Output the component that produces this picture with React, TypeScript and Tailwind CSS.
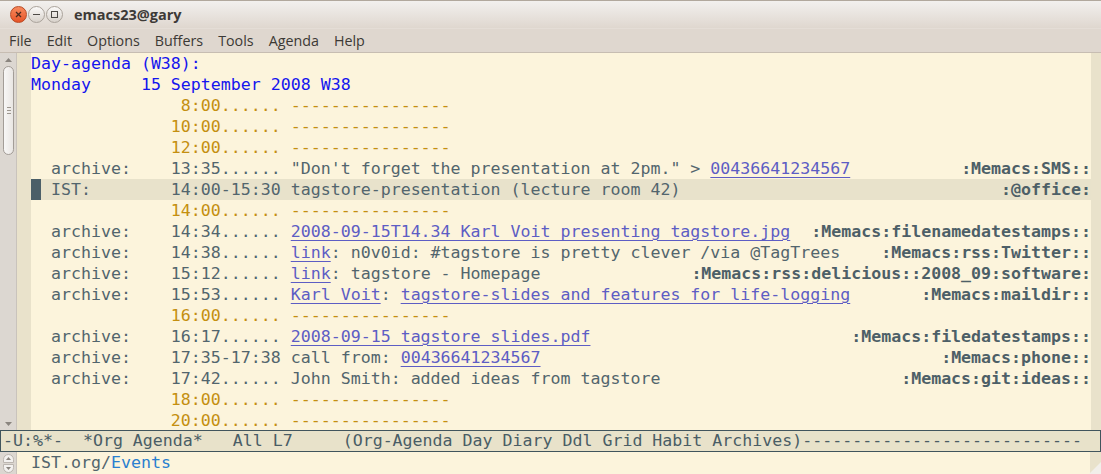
import React from "react";

type Seg = { t: string; c?: "g" | "b" | "y" | "l" | "t" };

const cls: Record<string, string> = {
  g: "text-[#52656d]",
  b: "text-[#1414ee]",
  y: "text-[#c48f10]",
  l: "text-[#5d5dc4] underline decoration-1 underline-offset-[3px]",
  t: "text-[#4d5f67] font-bold",
};

const grid = (time: string): Seg[] => [
  { t: "              " + time + "...... ----------------", c: "y" },
];
const arch = (time: string, rest: Seg[]): Seg[] => [
  { t: "  archive:    " + time + " ", c: "g" },
  ...rest,
];

const lines: { left: Seg[]; tag?: string; hl?: boolean }[] = [
  { left: [{ t: "Day-agenda (W38):", c: "b" }] },
  { left: [{ t: "Monday     15 September 2008 W38", c: "b" }] },
  { left: grid(" 8:00") },
  { left: grid("10:00") },
  { left: grid("12:00") },
  {
    left: arch("13:35......", [
      { t: "\"Don't forget the presentation at 2pm.\" > ", c: "g" },
      { t: "00436641234567", c: "l" },
    ]),
    tag: ":Memacs:SMS::",
  },
  {
    left: [
      { t: "  IST:        14:00-15:30 tagstore-presentation (lecture room 42)", c: "g" },
    ],
    tag: ":@office:",
    hl: true,
  },
  { left: grid("14:00") },
  {
    left: arch("14:34......", [
      { t: "2008-09-15T14.34 Karl Voit presenting tagstore.jpg", c: "l" },
    ]),
    tag: ":Memacs:filenamedatestamps::",
  },
  {
    left: arch("14:38......", [
      { t: "link", c: "l" },
      { t: ": n0v0id: #tagstore is pretty clever /via @TagTrees", c: "g" },
    ]),
    tag: ":Memacs:rss:Twitter::",
  },
  {
    left: arch("15:12......", [
      { t: "link", c: "l" },
      { t: ": tagstore - Homepage", c: "g" },
    ]),
    tag: ":Memacs:rss:delicious::2008_09:software:",
  },
  {
    left: arch("15:53......", [
      { t: "Karl Voit", c: "l" },
      { t: ": ", c: "g" },
      { t: "tagstore-slides and features for life-logging", c: "l" },
    ]),
    tag: ":Memacs:maildir::",
  },
  { left: grid("16:00") },
  {
    left: arch("16:17......", [{ t: "2008-09-15_tagstore_slides.pdf", c: "l" }]),
    tag: ":Memacs:filedatestamps::",
  },
  {
    left: arch("17:35-17:38", [
      { t: "call from: ", c: "g" },
      { t: "00436641234567", c: "l" },
    ]),
    tag: ":Memacs:phone::",
  },
  {
    left: arch("17:42......", [
      { t: "John Smith: added ideas from tagstore", c: "g" },
    ]),
    tag: ":Memacs:git:ideas::",
  },
  { left: grid("18:00") },
  { left: grid("20:00") },
];

const mono = { fontFamily: '"DejaVu Sans Mono", monospace' };

function Line({ l }: { l: (typeof lines)[number] }) {
  return (
    <div
      className={
        "relative flex h-[21px] justify-between whitespace-pre leading-[21px] " +
        (l.hl ? "bg-[#e8e2cb]" : "")
      }
    >
      {l.hl && <div className="absolute left-0 top-0 h-[21px] w-[10px] bg-[#4b5f68]" />}
      <div className="relative">
        {l.left.map((s, i) => (
          <span key={i} className={cls[s.c || "g"]}>
            {s.t}
          </span>
        ))}
      </div>
      {l.tag && <div className={cls.t}>{l.tag}</div>}
    </div>
  );
}

function Btn({ kind }: { kind: "close" | "min" | "max" }) {
  if (kind === "close")
    return (
      <div className="flex h-[17px] w-[17px] items-center justify-center rounded-full border border-[#b84a24] bg-gradient-to-b from-[#f7895c] to-[#e65326]">
        <svg width="7" height="7" viewBox="0 0 7 7">
          <path d="M1 1L6 6M6 1L1 6" stroke="#4a2a1e" strokeWidth="1.3" />
        </svg>
      </div>
    );
  return (
    <div className="flex h-[17px] w-[17px] items-center justify-center rounded-full border border-[#aaa39b] bg-gradient-to-b from-[#fbfaf9] to-[#d8d2cb]">
      {kind === "min" ? (
        <div className="h-[1px] w-[7px] bg-[#4d4a46]" />
      ) : (
        <div className="h-[7px] w-[7px] border border-[#4d4a46]" />
      )}
    </div>
  );
}

export default function App() {
  return (
    <div className="flex h-[474px] w-[1101px] flex-col overflow-hidden bg-[#fcf4dc]">
      {/* title bar */}
      <div
        className="flex h-[28px] items-center border-t border-[#b1a89d] bg-gradient-to-b from-[#f2f0ee] to-[#dfd7cf] pl-[10px]"
        style={{ fontFamily: '"Open Sans", "Liberation Sans", sans-serif' }}
      >
        <div className="flex items-center gap-[1px]">
          <Btn kind="close" />
          <Btn kind="min" />
          <Btn kind="max" />
        </div>
        <div className="ml-[11px] text-[14.5px] font-bold text-[#3d3a37]">emacs23@gary</div>
      </div>
      {/* menu */}
      <div
        className="flex h-[25px] items-center gap-[15px] border-b border-[#c7bdb2] border-t border-t-[#e4ddd6] bg-[#dfd7cf] pl-[9px] text-[14.3px] text-[#3c3935]"
        style={{ fontFamily: '"Open Sans", "Liberation Sans", sans-serif' }}
      >
        <span>File</span>
        <span>Edit</span>
        <span>Options</span>
        <span>Buffers</span>
        <span>Tools</span>
        <span>Agenda</span>
        <span>Help</span>
      </div>
      {/* main */}
      <div className="flex h-[377px]">
        {/* scrollbar */}
        <div className="flex w-[17px] flex-col border-r border-[#c9c3bc] bg-[#dcd7d1] pl-[3px] pr-[2px]">
          <div className="flex h-[13px] items-center justify-center">
            <svg width="7" height="4" viewBox="0 0 7 4">
              <path d="M0 4L3.5 0L7 4Z" fill="#8a857f" />
            </svg>
          </div>
          <div className="flex h-[89px] flex-col items-center justify-center gap-[2px] rounded-[6px] border border-[#a39d97] bg-gradient-to-r from-[#f8f7f6] to-[#e9e6e3]">
            <div className="h-[1px] w-[4px] bg-[#9d978f]" />
            <div className="h-[1px] w-[4px] bg-[#9d978f]" />
            <div className="h-[1px] w-[4px] bg-[#9d978f]" />
          </div>
          <div className="flex-1" />
          <div className="flex h-[13px] items-center justify-center">
            <svg width="7" height="4" viewBox="0 0 7 4">
              <path d="M0 0L3.5 4L7 0Z" fill="#8a857f" />
            </svg>
          </div>
        </div>
        {/* left fringe */}
        <div className="w-[14px] bg-[#e9e2cb]" />
        {/* text */}
        <div className="w-[1060px] text-[16.6px]" style={mono}>
          {lines.map((l, i) => (
            <Line key={i} l={l} />
          ))}
        </div>
        <div className="flex-1 bg-[#e9e2cb]" />
      </div>
      {/* mode line */}
      <div
        className="h-[22px] overflow-hidden whitespace-pre border border-[#41555d] bg-[#e8e2ca] pl-[2px] text-[16.6px] leading-[20px] text-[#4a5d65]"
        style={mono}
      >
        {"-U:%*-  *Org Agenda*   All L7     (Org-Agenda Day Diary Ddl Grid Habit Archives)" +
          "-".repeat(28)}
      </div>
      {/* minibuffer */}
      <div className="flex flex-1">
        <div className="flex w-[17px] flex-col items-center justify-center gap-[1px] border-r border-[#c9c3bc] bg-[#dcd7d1]">
          <div className="flex h-[9px] w-[11px] items-center justify-center rounded-t-full border border-[#bcb6b0] bg-[#f3f1ef]">
            <svg width="5" height="3" viewBox="0 0 5 3">
              <path d="M0 3L2.5 0L5 3Z" fill="#8a857f" />
            </svg>
          </div>
          <div className="flex h-[9px] w-[11px] items-center justify-center rounded-b-full border border-[#bcb6b0] bg-[#f3f1ef]">
            <svg width="5" height="3" viewBox="0 0 5 3">
              <path d="M0 0L2.5 3L5 0Z" fill="#8a857f" />
            </svg>
          </div>
        </div>
        <div
          className="w-[1073px] whitespace-pre pl-[14px] text-[16.6px] leading-[21px] text-[#52656d]"
          style={mono}
        >
          IST.org/<span className="text-[#2a7fcf]">Events</span>
        </div>
        <div className="relative flex-1 bg-[#e9e2cb]">
          <div className="absolute bottom-0 right-0 h-0 w-0 border-b-[12px] border-l-[12px] border-b-[#f2efea] border-l-transparent" />
        </div>
      </div>
    </div>
  );
}
